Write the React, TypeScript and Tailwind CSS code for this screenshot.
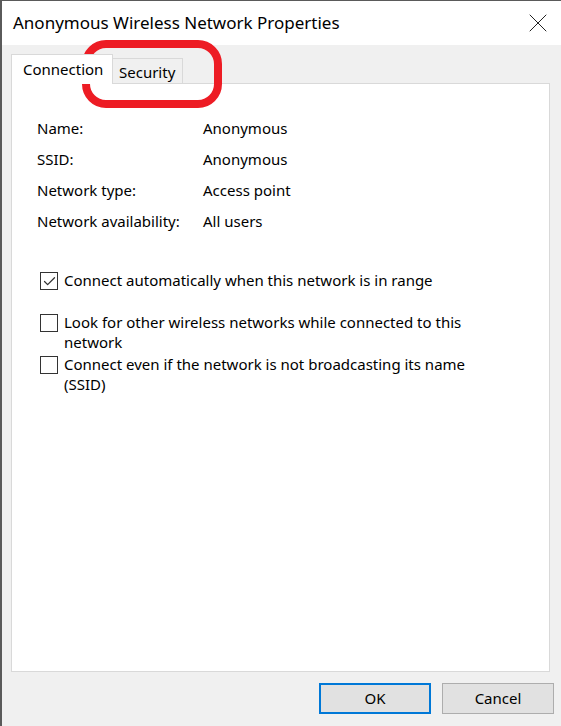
import { Check, X } from 'lucide-react';

const font = { fontFamily: '"Noto Sans", "Open Sans", sans-serif' };

const details = [
  { label: 'Name:', value: 'Anonymous' },
  { label: 'SSID:', value: 'Anonymous' },
  { label: 'Network type:', value: 'Access point' },
  { label: 'Network availability:', value: 'All users' },
];

function CheckRow({ checked, children }: { checked?: boolean; children: React.ReactNode }) {
  return (
    <div className="flex items-start gap-[6px]">
      <div className="mt-[2px] flex h-[18px] w-[18px] shrink-0 items-center justify-center border border-[#333333] bg-white">
        {checked && <Check className="h-[15px] w-[15px] text-[#333333]" strokeWidth={2} />}
      </div>
      <span className="leading-[20px]">{children}</span>
    </div>
  );
}

export default function App() {
  return (
    <div
      className="relative h-[726px] w-[561px] overflow-hidden border-l-2 border-t border-[#5a5a5a] bg-[#f0f0f0] text-[15px] text-black"
      style={font}
    >
      {/* title bar */}
      <div className="flex h-[44px] items-center justify-between bg-white pl-[11px] pr-[7px]">
        <span className="text-[17px]">Anonymous Wireless Network Properties</span>
        <X className="h-[32px] w-[32px] text-[#222]" strokeWidth={0.75} />
      </div>

      {/* tabs */}
      <div className="ml-[9px] mt-[9px] flex items-end">
        <div className="relative z-10 -mb-px flex h-[30px] w-[102px] items-center border border-b-0 border-[#d9d9d9] bg-white pl-[11px]">
          Connection
        </div>
        <div className="flex h-[25px] w-[70px] items-center border border-b-0 border-l-0 border-[#d9d9d9] bg-[#f0f0f0] pl-[6px] pt-[2px]">
          Security
        </div>
      </div>

      {/* panel */}
      <div className="ml-[9px] h-[589px] w-[539px] border border-[#d9d9d9] bg-white pl-[25px] pt-[34px]">
        <div className="flex flex-col gap-[10px]">
          {details.map((d) => (
            <div key={d.label} className="flex h-[21px] items-center">
              <span className="w-[166px]">{d.label}</span>
              <span>{d.value}</span>
            </div>
          ))}
        </div>

        <div className="mt-[38px] pl-[3px]">
          <CheckRow checked>Connect automatically when this network is in range</CheckRow>
        </div>
        <div className="mt-[22px] flex flex-col gap-[2px] pl-[3px] pr-[60px]">
          <CheckRow>Look for other wireless networks while connected to this network</CheckRow>
          <CheckRow>Connect even if the network is not broadcasting its name (SSID)</CheckRow>
        </div>
      </div>

      {/* buttons */}
      <div className="mt-[11px] flex justify-end gap-[11px] pr-[7px]">
        <button className="h-[31px] w-[112px] border-2 border-[#0078d7] bg-[#e1e1e1]">OK</button>
        <button className="h-[31px] w-[112px] border border-[#adadad] bg-[#e1e1e1]">Cancel</button>
      </div>

      {/* red annotation */}
      <svg className="pointer-events-none absolute left-[78px] top-[37px]" width="144" height="72" viewBox="0 0 144 72">
        <rect x="6" y="6" width="132" height="60" rx="20" fill="none" stroke="#ed1c24" strokeWidth="8" />
      </svg>
    </div>
  );
}
